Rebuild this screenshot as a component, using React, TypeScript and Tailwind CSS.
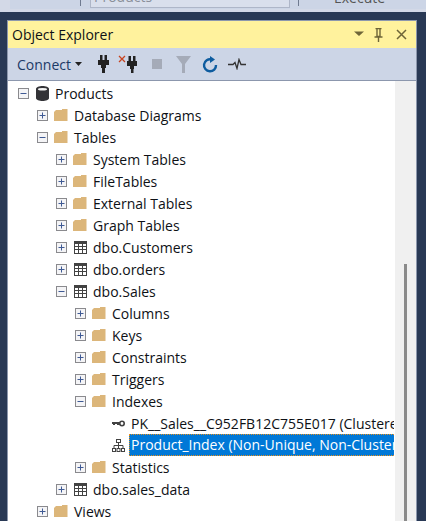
import React from "react";

type Kind = "db" | "folder" | "table" | "key" | "index";
type RowData = { d: 0 | 1 | 2 | 3 | 4; exp?: "plus" | "minus"; icon: Kind; text: string; sel?: boolean };

const rows: RowData[] = [
  { d: 0, exp: "minus", icon: "db", text: "Products" },
  { d: 1, exp: "plus", icon: "folder", text: "Database Diagrams" },
  { d: 1, exp: "minus", icon: "folder", text: "Tables" },
  { d: 2, exp: "plus", icon: "folder", text: "System Tables" },
  { d: 2, exp: "plus", icon: "folder", text: "FileTables" },
  { d: 2, exp: "plus", icon: "folder", text: "External Tables" },
  { d: 2, exp: "plus", icon: "folder", text: "Graph Tables" },
  { d: 2, exp: "plus", icon: "table", text: "dbo.Customers" },
  { d: 2, exp: "plus", icon: "table", text: "dbo.orders" },
  { d: 2, exp: "minus", icon: "table", text: "dbo.Sales" },
  { d: 3, exp: "plus", icon: "folder", text: "Columns" },
  { d: 3, exp: "plus", icon: "folder", text: "Keys" },
  { d: 3, exp: "plus", icon: "folder", text: "Constraints" },
  { d: 3, exp: "plus", icon: "folder", text: "Triggers" },
  { d: 3, exp: "minus", icon: "folder", text: "Indexes" },
  { d: 4, icon: "key", text: "PK__Sales__C952FB12C755E017 (Clustered)" },
  { d: 4, icon: "index", text: "Product_Index (Non-Unique, Non-Clustered)", sel: true },
  { d: 3, exp: "plus", icon: "folder", text: "Statistics" },
  { d: 2, exp: "plus", icon: "table", text: "dbo.sales_data" },
  { d: 1, exp: "plus", icon: "folder", text: "Views" },
];

const indent = ["pl-[10px]", "pl-[29px]", "pl-[48px]", "pl-[67px]", "pl-[86px]"];

function Expander({ kind }: { kind?: "plus" | "minus" }) {
  if (!kind) return <span className="w-[11px] h-[11px] shrink-0" />;
  return (
    <svg width="11" height="11" viewBox="0 0 11 11" className="shrink-0">
      <rect x="0.5" y="0.5" width="10" height="10" fill="#f4f4f6" stroke="#8a8a8e" />
      <path d="M2.5 5.5h6" stroke="#3f5a94" strokeWidth="1" />
      {kind === "plus" && <path d="M5.5 2.5v6" stroke="#3f5a94" strokeWidth="1" />}
    </svg>
  );
}

function RowIcon({ kind }: { kind: Kind }) {
  if (kind === "folder")
    return (
      <svg width="14" height="12" viewBox="0 0 14 12" className="shrink-0">
        <path d="M0 2.5h1V2h0.5V1H8V0h5.5v12H0z" fill="#dcb67a" />
      </svg>
    );
  if (kind === "db")
    return (
      <svg width="13" height="15" viewBox="0 0 13 15" className="shrink-0">
        <path d="M0 3c0-4 13-4 13 0v9c0 4-13 4-13 0z" fill="#333337" />
        <ellipse cx="6.5" cy="3.2" rx="4.6" ry="1.3" fill="#f4f4f4" />
      </svg>
    );
  if (kind === "table")
    return (
      <svg width="13" height="13" viewBox="0 0 13 13" className="shrink-0">
        <rect x="0.5" y="0.5" width="12" height="12" fill="#fff" stroke="#424242" />
        <path d="M0 1.5h13M0 2.5h13" stroke="#424242" />
        <path d="M0 5.5h13M0 8.5h13M4.5 2v11M8.5 2v11" stroke="#424242" />
      </svg>
    );
  if (kind === "key")
    return (
      <svg width="13" height="7" viewBox="0 0 13 7" className="shrink-0">
        <path d="M0 2h8v3H5V4H3v1H1V4H0z" fill="#424242" />
        <circle cx="10" cy="3.5" r="2.2" fill="#fff" stroke="#424242" strokeWidth="1.6" />
      </svg>
    );
  return (
    <svg width="13" height="13" viewBox="0 0 13 13" className="shrink-0">
      <rect x="4.5" y="0.5" width="4" height="3" fill="#fff" stroke="#424242" />
      <rect x="0.5" y="9.5" width="3" height="3" fill="#fff" stroke="#424242" />
      <rect x="5" y="9.5" width="3" height="3" fill="#fff" stroke="#424242" />
      <rect x="9.5" y="9.5" width="3" height="3" fill="#fff" stroke="#424242" />
      <path d="M6.5 4v5.5M2 9.5V6.5h9v3" fill="none" stroke="#424242" />
    </svg>
  );
}

function Row({ r }: { r: RowData }) {
  return (
    <div className={`h-[22px] flex items-center shrink-0 ${indent[r.d]}`}>
      <Expander kind={r.exp} />
      <span className="w-[6px] shrink-0" />
      <span className="w-[14px] flex justify-center shrink-0">
        <RowIcon kind={r.icon} />
      </span>
      {r.sel ? (
        <span className="ml-[4px] pl-[2px] pr-[2px] h-[22px] leading-[21px] grow min-w-max bg-[#0078d7] text-white outline-1 -outline-offset-1 outline-dotted outline-[#e8901c]">
          {r.text}
        </span>
      ) : (
        <span className="ml-[6px] whitespace-nowrap text-[#0e1116]">{r.text}</span>
      )}
    </div>
  );
}

export default function App() {
  return (
    <div className="w-[426px] h-[521px] overflow-hidden bg-[#293955] flex flex-col font-['Open_Sans','Noto_Sans',sans-serif] text-[14px]">
      <div className="h-[12px] shrink-0 bg-[#d3d9e7] overflow-hidden">
        <div className="h-[9px] ml-[10px] bg-[#ccd5e6] flex items-stretch overflow-hidden text-[#6b7280]">
          <div className="w-[71px] h-[6px] border-r border-[#6f7a90]" />
          <div className="ml-[9px] w-[200px] h-[8px] bg-[#d9dfec] border-x border-b border-[#aeb6c8] pl-[3px] overflow-hidden">
            <div className="-mt-[14px] text-[#8a8f9a]">Products</div>
          </div>
          <div className="ml-[8px] w-px h-[6px] bg-[#6f7a90]" />
          <div className="ml-[35px] -mt-[13px] text-[#555]">Execute</div>
        </div>
      </div>
      <div className="h-[8px] shrink-0" />
      <div className="ml-[7px] mr-[9px] flex-1 min-h-0 flex flex-col bg-white border-x border-t border-[#8c97ad]">
        <div className="h-[27px] shrink-0 bg-[#fff29d] flex items-center pl-[4px] pr-[8px] text-[#0e1116]">
          <span className="flex-1">Object Explorer</span>
          <svg width="54" height="14" viewBox="0 0 54 14">
            <path d="M0 3.5h10L5 8z" fill="#6e6538" />
            <path d="M21.5 0.5h6M23 0.5v8h3v-8M20.5 9h8M24.5 9v5" fill="none" stroke="#6e6538" strokeWidth="1.4" />
            <path d="M43 2l9 9M52 2l-9 9" stroke="#6e6538" strokeWidth="1.5" />
          </svg>
        </div>
        <div className="h-[33px] shrink-0 bg-[#ccd5e6] flex items-center pl-[9px] border-b border-[#8c97ad] text-[#1c3a66]">
          <span>Connect</span>
          <svg width="7" height="4" viewBox="0 0 7 4" className="ml-[4px]">
            <path d="M0 0h7L3.5 4z" fill="#222" />
          </svg>
          <svg width="11" height="19" viewBox="0 0 11 19" className="ml-[16px]">
            <path d="M2 0h2.500v5H2zM6.500 0h2.500v5H6.500zM0 5h11v5H8v3H3v-3H0zM4 13h3v5H4z" fill="#222" />
          </svg>
          <svg width="19" height="19" viewBox="0 0 19 19" className="ml-[9px]">
            <path d="M1 1l6 6M7 1L1 7" stroke="#c8431f" strokeWidth="1.3" />
            <path d="M10.500 1h2.500v5h-2.500zM15 1h2.500v5H15zM9 6h10v5h-3v3h-4v-3H9zM13 14h2.500v4H13z" fill="#222" />
          </svg>
          <span className="ml-[15px] w-[10px] h-[10px] bg-[#a5abb8]" />
          <svg width="15" height="17" viewBox="0 0 15 17" className="ml-[14px]">
            <path d="M0 0h15L9 8v9H6V8z" fill="#a5abb8" />
          </svg>
          <svg width="16" height="17" viewBox="0 0 16 17" className="ml-[11px]">
            <path d="M9.500 3.500A6 6 0 1 0 14 9" fill="none" stroke="#0e5c9f" strokeWidth="2.400" />
            <path d="M8 0v7l5-3.500z" fill="#0e5c9f" />
          </svg>
          <svg width="18" height="12" viewBox="0 0 18 12" className="ml-[10px]">
            <path d="M0 6.500h5l2-2 2 6 2-9 2 5h5" fill="none" stroke="#333" strokeWidth="1.300" />
          </svg>
        </div>
        <div className="flex-1 min-h-0 flex pt-[1px]">
          <div className="w-[386px] mr-[1px] shrink-0 overflow-hidden flex flex-col">
            {rows.map((r) => (
              <Row key={r.text} r={r} />
            ))}
          </div>
          <div className="w-[21px] shrink-0 bg-[#f0f0f0] flex justify-center -mt-px pt-[183px]">
            <div className="w-[3px] h-full bg-[#8a8a8a]" />
          </div>
        </div>
      </div>
    </div>
  );
}
